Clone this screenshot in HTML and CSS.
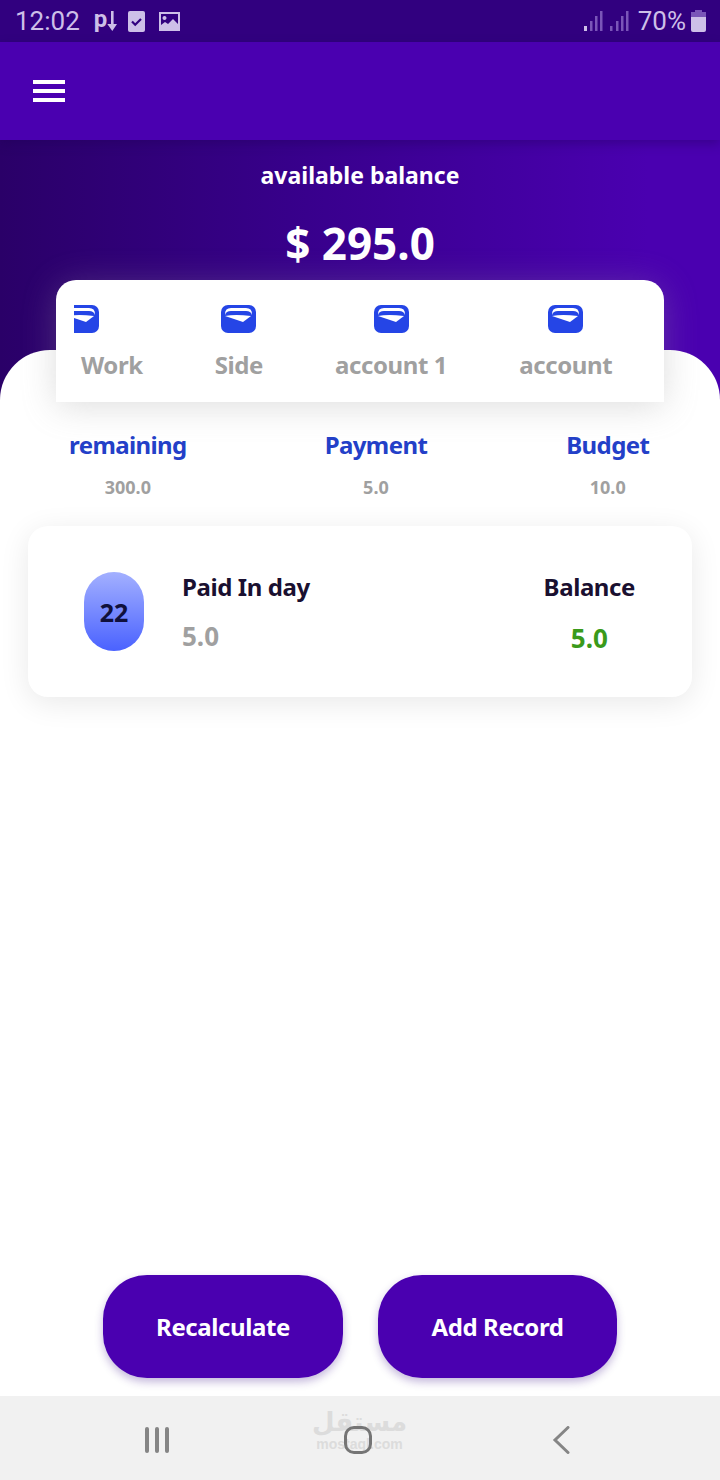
FILE: index.html
```html
<!DOCTYPE html>
<html lang="en">
<head>
  <meta charset="UTF-8">
  <meta name="viewport" content="width=device-width, initial-scale=1.0">
  <title>Balance</title>
  <link rel="stylesheet" href="styles.css">
</head>
<body>
  <svg class="defs" width="0" height="0">
    <symbol id="wallet" viewBox="0 0 35 28">
      <rect width="35" height="28" rx="7" fill="#2545e6"/>
      <path d="M4 9 Q4 3 10 3 H25 Q31 3 31 9 L31 10 Q30 6 25 6 H10 Q5 6 4 10 Z" fill="#fff"/>
      <path d="M4 11 Q14 9 30 11 L22 17 Z" fill="#fff"/>
    </symbol>
  </svg>

  <div class="status">
    <span class="status__time">12:02</span>
    <span class="status__p">p</span>
    <svg class="status__arrow" width="10" height="20" viewBox="0 0 10 20"><path d="M4 0h2.600v13h3.400l-4.700 7-5-7h3.700z" fill="#cdbfe8"/></svg>
    <svg class="status__check" width="17" height="21" viewBox="0 0 17 21"><rect width="17" height="21" rx="2" fill="#cdbfe8"/><path d="M4 10.500l3.200 3.200 5.800-5.700" fill="none" stroke="#31007f" stroke-width="2.200"/></svg>
    <svg class="status__pic" width="21" height="19" viewBox="0 0 21 19"><path fill-rule="evenodd" d="M0 0h21v19H0zM2 2v11l4-3 3 2 5-5 5 5V2zM5.500 4a2 2 0 1 0 .01 0z" fill="#cdbfe8"/></svg>
    <span class="status__fill"></span>
    <svg class="status__signal" width="19" height="20" viewBox="0 0 19 20"><rect y="15" width="3" height="5" fill="#cdbfe8"/><rect x="6" y="10" width="2.500" height="10" fill="#7a55b8"/><rect x="11" y="5" width="2.500" height="15" fill="#7a55b8"/><rect x="16" width="2.500" height="20" fill="#7a55b8"/></svg>
    <svg class="status__signal" width="19" height="20" viewBox="0 0 19 20"><rect y="15" width="2.500" height="5" fill="#7a55b8"/><rect x="6" y="10" width="2.500" height="10" fill="#7a55b8"/><rect x="11" y="5" width="2.500" height="15" fill="#7a55b8"/><rect x="16" width="2.500" height="20" fill="#7a55b8"/></svg>
    <span class="status__pct">70%</span>
    <svg width="15" height="22" viewBox="0 0 15 22"><path d="M4 0h7v2h4v6H0V2h4z" fill="#7a55b8"/><path d="M0 7h15v13a2 2 0 0 1-2 2H2a2 2 0 0 1-2-2z" fill="#cdbfe8"/></svg>
  </div>

  <header class="appbar">
    <div class="menu"><span></span><span></span><span></span></div>
  </header>

  <section class="hero">
    <h2 class="hero__label">available balance</h2>
    <p class="hero__amount">$ 295.0</p>
    <div class="tabs">
      <div class="tab">
        <div class="tab__cut"><svg class="tab__icon"><use href="#wallet"/></svg></div>
        <span>Work</span>
      </div>
      <div class="tab">
        <svg class="tab__icon"><use href="#wallet"/></svg>
        <span>Side</span>
      </div>
      <div class="tab">
        <svg class="tab__icon"><use href="#wallet"/></svg>
        <span>account 1</span>
      </div>
      <div class="tab">
        <svg class="tab__icon"><use href="#wallet"/></svg>
        <span>account</span>
      </div>
    </div>
  </section>

  <main class="sheet">
    <div class="stats">
      <div class="stat stat--remaining"><h3>remaining</h3><p>300.0</p></div>
      <div class="stat stat--payment"><h3>Payment</h3><p>5.0</p></div>
      <div class="stat stat--budget"><h3>Budget</h3><p>10.0</p></div>
    </div>

    <div class="record">
      <div class="record__day">22</div>
      <div class="record__paid">
        <h4>Paid In day</h4>
        <p>5.0</p>
      </div>
      <div class="record__balance">
        <h4>Balance</h4>
        <p>5.0</p>
      </div>
    </div>

    <div class="actions">
      <a href="#" class="btn">Recalculate</a>
      <a href="#" class="btn">Add Record</a>
    </div>
  </main>

  <nav class="navbar">
    <div class="navbar__recent"><span></span><span></span><span></span></div>
    <div class="navbar__home">
      <div class="mark">
        <span class="mark__ar" lang="ar">مستقل</span>
        <span class="mark__en">mostaql.com</span>
      </div>
      <span class="navbar__square"></span>
    </div>
    <svg width="18" height="28" viewBox="0 0 18 28"><path d="M16 1.500 3 14l13 12.500" fill="none" stroke="#858585" stroke-width="3" stroke-linecap="round"/></svg>
  </nav>
</body>
</html>
```

FILE: styles.css
```css
/* reset */
* {
  margin: 0;
  padding: 0;
  box-sizing: border-box;
}
a {
  text-decoration: none;
}
body {
  width: 720px;
  height: 1480px;
  overflow: hidden;
  display: flex;
  flex-direction: column;
  background-color: #fff;
  font-family: "Noto Sans", "Open Sans", sans-serif;
}
.defs {
  position: absolute;
}

/* status */
.status {
  height: 42px;
  flex: none;
  display: flex;
  align-items: center;
  padding: 0 14px 0 15px;
  background-color: #31007f;
  color: #cdbfe8;
}
.status__time {
  font-family: Roboto, sans-serif;
  font-size: 26px;
  margin-right: 14px;
}
.status__p {
  font-family: Roboto, sans-serif;
  font-size: 24px;
  font-weight: 700;
  line-height: 1;
  margin-top: -4px;
}
.status__arrow {
  margin-right: 11px;
}
.status__check {
  margin-right: 14px;
}
.status__fill {
  flex: 1;
}
.status__signal {
  margin-right: 7px;
}
.status__pct {
  font-family: Roboto, sans-serif;
  font-size: 26px;
  margin-left: 2px;
  margin-right: 5px;
}

/* appbar */
.appbar {
  height: 98px;
  flex: none;
  display: flex;
  align-items: center;
  padding-left: 33px;
  background-color: #4a00b0;
  position: relative;
  z-index: 3;
  box-shadow: 0 4px 10px rgba(30, 0, 80, 0.35);
}
.menu {
  width: 32px;
  display: flex;
  flex-direction: column;
  gap: 5px;
}
.menu span {
  height: 4px;
  background-color: #fff;
}

/* hero */
.hero {
  height: 260px;
  flex: none;
  padding-top: 18px;
  text-align: center;
  background: linear-gradient(90deg, #2a0068 0%, #37008a 40%, #4a00b0 90%);
  color: #fff;
}
.hero__label {
  font-size: 23px;
  font-weight: 700;
  line-height: 34px;
}
.hero__amount {
  font-size: 44px;
  font-weight: 700;
  line-height: 60px;
  margin-top: 21px;
}
.tabs {
  width: 608px;
  height: 122px;
  margin: 7px 0 0 56px;
  padding: 25px 0 0 25px;
  display: flex;
  gap: 72px;
  background-color: #fff;
  border-radius: 20px 20px 0 0;
  position: relative;
  z-index: 2;
  box-shadow: 0 4px 34px rgba(150, 150, 150, 0.32);
}
.tab {
  display: flex;
  flex-direction: column;
  align-items: center;
  color: #a0a0a0;
  font-size: 24px;
  font-weight: 700;
  line-height: 34px;
  letter-spacing: -0.4px;
  white-space: nowrap;
}
.tab__icon {
  width: 35px;
  height: 28px;
  flex: none;
  margin-bottom: 15px;
}
.tab__cut {
  width: 25px;
  height: 43px;
  overflow: hidden;
  display: flex;
  justify-content: flex-end;
  align-self: flex-start;
  margin-left: -7px;
}

/* sheet */
.sheet {
  flex: 1;
  margin-top: -50px;
  padding-top: 78px;
  background-color: #fff;
  border-radius: 50px 50px 0 0;
  position: relative;
  z-index: 1;
  display: flex;
  flex-direction: column;
}
.stats {
  height: 98px;
  display: flex;
}
.stat {
  text-align: center;
  white-space: nowrap;
}
.stat--remaining {
  margin-left: 69px;
}
.stat--payment {
  margin-left: 138px;
}
.stat--budget {
  margin-left: 139px;
}
.stat h3 {
  font-size: 24px;
  font-weight: 700;
  line-height: 34px;
  letter-spacing: -0.6px;
  color: #2340c8;
}
.stat p {
  font-size: 18px;
  font-weight: 700;
  line-height: 24px;
  margin-top: 13px;
  color: #a0a0a0;
}

/* record */
.record {
  height: 171px;
  margin: 0 28px;
  padding: 0 57px 0 56px;
  display: flex;
  align-items: center;
  background-color: #fff;
  border-radius: 20px;
  box-shadow: 0 6px 30px rgba(0, 0, 0, 0.09);
}
.record__day {
  width: 60px;
  height: 79px;
  display: flex;
  align-items: center;
  justify-content: center;
  font-size: 25px;
  font-weight: 700;
  color: #10103c;
  background: linear-gradient(180deg, #a3b0ff 0%, #4a62ff 100%);
  border-radius: 30px;
}
.record__paid {
  flex: 1;
  margin-left: 38px;
}
.record h4 {
  font-size: 24px;
  font-weight: 700;
  line-height: 34px;
  letter-spacing: -0.4px;
  color: #1a1030;
}
.record p {
  font-size: 26px;
  font-weight: 700;
  line-height: 36px;
  margin-top: 14px;
}
.record__paid p {
  color: #a0a0a0;
}
.record__balance {
  padding-top: 2px;
  text-align: center;
}
.record__balance p {
  margin-top: 16px;
  color: #3a9a1a;
}

/* actions */
.actions {
  margin-top: auto;
  padding: 0 103px 18px;
  display: flex;
  justify-content: space-between;
}
.btn {
  width: 240px;
  height: 103px;
  display: flex;
  align-items: center;
  justify-content: center;
  font-size: 24px;
  font-weight: 700;
  letter-spacing: -0.4px;
  color: #fff;
  background-color: #4a00b0;
  border-radius: 44px;
  box-shadow: 0 4px 8px rgba(60, 20, 140, 0.3);
}
.btn + .btn {
  width: 239px;
}

/* navbar */
.navbar {
  height: 84px;
  flex: none;
  padding: 3px 150px 0 145px;
  display: flex;
  align-items: center;
  justify-content: space-between;
  background-color: #f1f1f1;
  position: relative;
  z-index: 2;
}
.navbar__recent {
  display: flex;
  gap: 6px;
}
.navbar__recent span {
  width: 4px;
  height: 26px;
  background-color: #858585;
  border-radius: 2px;
}
.navbar__home {
  position: relative;
  width: 28px;
  height: 28px;
  margin-right: 6px;
}
.navbar__square {
  display: block;
  width: 28px;
  height: 28px;
  border: 3px solid #757575;
  border-radius: 10px;
  position: relative;
}
.mark {
  position: absolute;
  left: -34px;
  top: -19px;
  width: 100px;
  text-align: center;
  color: #dcdcdc;
}
.mark__ar {
  display: block;
  font-family: "DejaVu Sans", sans-serif;
  font-size: 26px;
  font-weight: 700;
  line-height: 30px;
}
.mark__en {
  display: block;
  font-family: "Liberation Sans", sans-serif;
  font-size: 14px;
  line-height: 14px;
  font-weight: 700;
}
```
